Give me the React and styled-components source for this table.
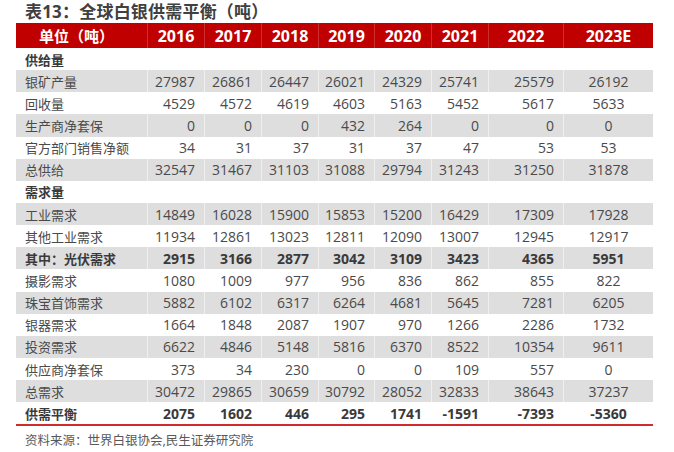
import React from 'react'
import styled, { createGlobalStyle } from 'styled-components'

const GlobalStyle = createGlobalStyle`
  body {
    margin: 0;
    background: #ffffff;
    font-family: "Open Sans", "Noto Sans CJK SC", sans-serif;
  }
`

const years = ['2016', '2017', '2018', '2019', '2020', '2021', '2022', '2023E']

const rows = [
  { label: '供给量', section: true },
  { label: '银矿产量', values: [27987, 26861, 26447, 26021, 24329, 25741, 25579, 26192] },
  { label: '回收量', values: [4529, 4572, 4619, 4603, 5163, 5452, 5617, 5633] },
  { label: '生产商净套保', values: [0, 0, 0, 432, 264, 0, 0, 0] },
  { label: '官方部门销售净额', values: [34, 31, 37, 31, 37, 47, 53, 53] },
  { label: '总供给', values: [32547, 31467, 31103, 31088, 29794, 31243, 31250, 31878] },
  { label: '需求量', section: true },
  { label: '工业需求', values: [14849, 16028, 15900, 15853, 15200, 16429, 17309, 17928] },
  { label: '其他工业需求', values: [11934, 12861, 13023, 12811, 12090, 13007, 12945, 12917] },
  { label: '其中：光伏需求', values: [2915, 3166, 2877, 3042, 3109, 3423, 4365, 5951], bold: true },
  { label: '摄影需求', values: [1080, 1009, 977, 956, 836, 862, 855, 822] },
  { label: '珠宝首饰需求', values: [5882, 6102, 6317, 6264, 4681, 5645, 7281, 6205] },
  { label: '银器需求', values: [1664, 1848, 2087, 1907, 970, 1266, 2286, 1732] },
  { label: '投资需求', values: [6622, 4846, 5148, 5816, 6370, 8522, 10354, 9611] },
  { label: '供应商净套保', values: [373, 34, 230, 0, 0, 109, 557, 0] },
  { label: '总需求', values: [30472, 29865, 30659, 30792, 28052, 32833, 38643, 37237] },
  { label: '供需平衡', values: [2075, 1602, 446, 295, 1741, -1591, -7393, -5360], bold: true },
]

const Page = styled.div`
  width: 674px;
  height: 452px;
  padding: 0 21px 0 16px;
  box-sizing: border-box;
  overflow: hidden;
`

const Title = styled.h1`
  margin: 0;
  height: 23px;
  padding-left: 9px;
  font-size: 17px;
  line-height: 23px;
  font-weight: 700;
  color: #404040;
  letter-spacing: 0.2px;
`

const Table = styled.div`
  width: 637px;
  border-bottom: 2px solid #d02c30;
`

const Row = styled.div`
  display: grid;
  grid-template-columns: 132px 57px 57px 57px 56px 57px 57px 75px 89px;
  height: ${p => (p.$head ? '25px' : '22.15px')};
  background: ${p => (p.$head ? '#c00000' : p.$shade ? '#dedede' : '#ffffff')};
`

const Cell = styled.div`
  display: flex;
  align-items: center;
  justify-content: ${p => p.$align || 'flex-end'};
  padding: ${p => (p.$label ? '0 0 0 9px' : p.$align === 'center' ? '0' : '0 9px 0 0')};
  font-size: ${p => (p.$head ? '16px' : p.$label ? '13px' : '14px')};
  font-weight: ${p => (p.$bold || p.$head ? 700 : 400)};
  color: ${p => (p.$head ? '#ffffff' : p.$bold ? '#3a3a3a' : '#4a4a4a')};
  white-space: nowrap;
  border-right: 1px solid ${p => (p.$head ? 'rgba(255,255,255,0.18)' : p.$shade ? 'rgba(255,255,255,0.5)' : 'transparent')};
  &:last-child {
    border-right: none;
  }
`

const HeadLabel = styled.span`
  font-size: 15px;
  margin-right: 10px;
`

const Source = styled.p`
  margin: 0;
  padding: 4px 0 0 9px;
  font-size: 12.5px;
  color: #595959;
`

const alignFor = i => (i === 7 ? 'center' : 'flex-end')

const App = () => {
  return (
    <Page>
      <GlobalStyle />
      <Title>表13：全球白银供需平衡（吨）</Title>
      <Table>
        <Row $head>
          <Cell $head $align='center'>
            <HeadLabel>单位（吨）</HeadLabel>
          </Cell>
          {years.map(y => (
            <Cell key={y} $head $align='center'>{y}</Cell>
          ))}
        </Row>
        {rows.map((r, idx) => {
          const shade = idx % 2 === 1
          return (
            <Row key={r.label} $shade={shade}>
              <Cell $label $align='flex-start' $bold={r.section || r.bold} $shade={shade}>
                {r.label}
              </Cell>
              {years.map((y, i) => (
                <Cell key={y} $align={alignFor(i)} $bold={r.bold} $shade={shade}>
                  {r.values ? r.values[i] : ''}
                </Cell>
              ))}
            </Row>
          )
        })}
      </Table>
      <Source>资料来源：世界白银协会,民生证券研究院</Source>
    </Page>
  )
}

export default App
